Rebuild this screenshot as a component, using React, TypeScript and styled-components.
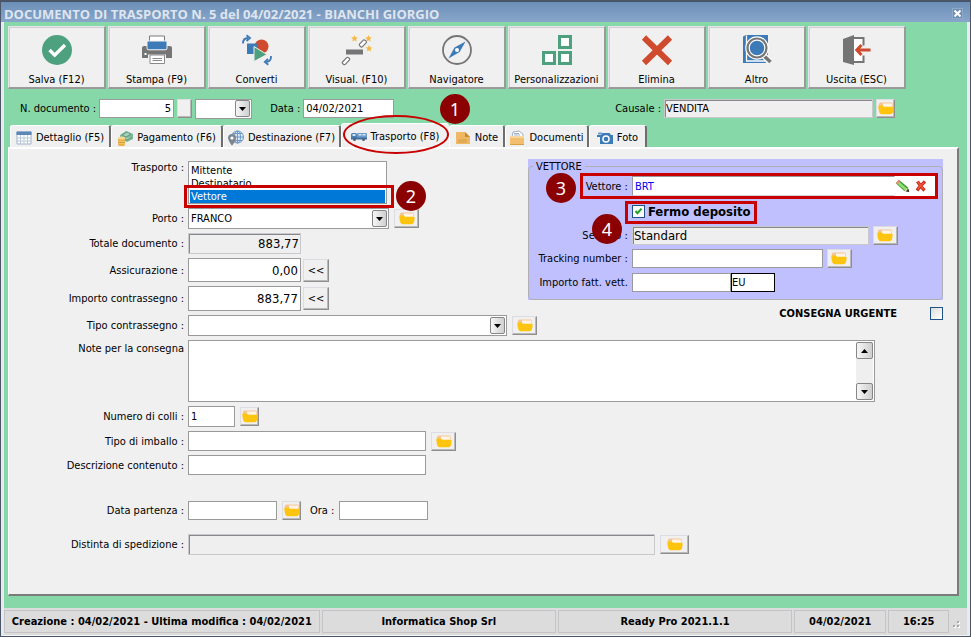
import React, { useRef } from 'react';
import styled, { createGlobalStyle, css } from 'styled-components';

const ui = '"DejaVu Sans Condensed", "DejaVu Sans", sans-serif';

const GlobalStyle = createGlobalStyle`
  * { box-sizing: border-box; }
  body { margin: 0; background: #f0f0f0; font: 11px/13px ${ui}; color: #000; }
  button, input, select, textarea { font: inherit; color: inherit; margin: 0; }
`;

/* ---------- window ---------- */

const Window = styled.div`
  display: flex;
  flex-direction: column;
  min-height: 100vh;
  border: 1px solid #4c5666;
  background: #e9e9f0;
`;

const TitleBar = styled.header`
  display: flex;
  align-items: center;
  justify-content: space-between;
  height: 21px;
  padding: 3px 7px 0 3px;
  border-top: 1px solid #46536a;
  background: linear-gradient(#6c8fb7, #88a6ca);
`;

const Title = styled.h1`
  margin: 0;
  font: bold 13px/16px "Open Sans", sans-serif;
  color: #dfe5ee;
  white-space: nowrap;
`;

const CloseButton = styled.button`
  display: flex;
  align-items: center;
  justify-content: center;
  width: 11px;
  height: 11px;
  padding: 0;
  border: 1px solid #8fa9c8;
  background: #6f8fb4;
`;

const Body = styled.main`
  flex: 1;
  display: flex;
  flex-direction: column;
  margin: 0 3px;
  padding: 4px 8px 12px 4px;
  background: #86d8a8;
`;

/* ---------- toolbar ---------- */

const Toolbar = styled.div`
  display: flex;
  gap: 2px;
`;

const ToolButton = styled.button`
  display: flex;
  flex-direction: column;
  align-items: center;
  gap: 7px;
  width: 98px;
  height: 63px;
  padding: 7px 0 0;
  border: 1px solid #e4e4ea;
  border-right: 2px solid #9a9a9a;
  border-bottom: 2px solid #9a9a9a;
  background: #f0f0f0;
  box-shadow: inset 1px 1px 0 #cfcfd4;
  white-space: nowrap;
  svg { display: block; width: 32px; height: 32px; }
`;

/* ---------- controls ---------- */

const sunken = css`
  padding: 0 1px;
  border-color: #c8c8cd;
  background: #efefef;
  box-shadow: inset 1px 1px 0 #88888c;
`;

const TextInput = styled.input<{ $w?: number; $h?: number; $right?: boolean; $big?: boolean; $sunken?: boolean }>`
  width: ${p => (p.$w ? `${p.$w}px` : 'auto')};
  flex: ${p => (p.$w ? '0 1 auto' : '1')};
  min-width: 0;
  height: ${p => p.$h ?? 19}px;
  padding: 0 2px;
  border: 1px solid #9a9a9a;
  border-radius: 0;
  background: #fff;
  outline: 0;
  font-size: ${p => (p.$big ? 13 : 11)}px;
  text-align: ${p => (p.$right ? 'right' : 'left')};
  ${p => p.$sunken && sunken}
`;

const CarrierInput = styled(TextInput)`
  border-color: #97979c #fff #d2d2d8 #97979c;
  color: #0000f0;
`;

const CurrencyInput = styled(TextInput)`
  padding: 0;
  border-color: #000;
`;

const InputPair = styled.div`
  display: flex;
`;

const PushButton = styled.button<{ $w: number; $h?: number }>`
  display: flex;
  align-items: center;
  justify-content: center;
  flex: none;
  width: ${p => p.$w}px;
  height: ${p => p.$h ?? 19}px;
  padding: 0;
  border: 1px solid #dcdce2;
  border-right-color: #8e8e8e;
  border-bottom-color: #8e8e8e;
  background: #f0f0f0;
  box-shadow: inset -1px -1px 0 #b9b9b9;
  svg { display: block; }
`;

const SelectBox = styled.div<{ $w: number; $h?: number }>`
  flex: none;
  display: grid;
  width: ${p => p.$w}px;
  height: ${p => p.$h ?? 21}px;
  border: 1px solid #9a9a9a;
  background: #fff;
  > * { grid-area: 1 / 1; }
`;

const Select = styled.select`
  appearance: none;
  width: 100%;
  padding: 0 18px 0 2px;
  border: 0;
  border-radius: 0;
  background: transparent;
  outline: 0;
`;

const Arrow = styled.span`
  display: flex;
  align-items: center;
  justify-content: center;
  justify-self: end;
  align-self: center;
  width: 15px;
  height: 17px;
  margin-right: 1px;
  border: 1px solid #85858a;
  border-radius: 2px;
  background: linear-gradient(90deg, #f6f6f6, #cfcfcf);
  pointer-events: none;
`;

const ListBox = styled.select`
  appearance: none;
  display: block;
  width: 199px;
  height: 43px;
  padding: 2px 1px;
  border: 1px solid #9a9a9a;
  border-radius: 0;
  background: #fff;
  outline: 0;
  overflow: hidden;
  option {
    min-height: 13px;
    height: 13px;
    padding: 0 1px;
    line-height: 13px;
  }
  option:checked {
    background: #0078d7 linear-gradient(#0078d7, #0078d7);
    color: #fff;
    -webkit-text-fill-color: #fff;
  }
`;

const CheckBox = styled.input`
  appearance: none;
  flex: none;
  width: 13px;
  height: 13px;
  border: 1px solid #1f5287;
  background: linear-gradient(135deg, #dcdcd7, #fff);
  &:checked {
    background: #fff
      url("data:image/svg+xml,%3Csvg xmlns='http://www.w3.org/2000/svg' viewBox='0 0 11 11'%3E%3Cpath d='M2.5 5l2 2.2 4-4.6' fill='none' stroke='%2321a121' stroke-width='2'/%3E%3C/svg%3E");
  }
`;

/* ---------- document row ---------- */

const DocRow = styled.div`
  display: flex;
  align-items: center;
  height: 19px;
  margin-top: 10px;
  padding: 0 64px 0 12px;
`;

const DocField = styled.div<{ $end?: boolean }>`
  display: flex;
  align-items: center;
  gap: 3px;
  margin-left: ${p => (p.$end ? 'auto' : '0')};
  margin-right: ${p => (p.$end ? '0' : '18px')};
`;

const DocLabel = styled.label`
  white-space: nowrap;
`;

/* ---------- tabs ---------- */

const Tabs = styled.div`
  display: flex;
  align-items: flex-end;
  height: 24px;
  margin-top: 5px;
  padding-left: 2px;
`;

const Tab = styled.button<{ $w: number; $active?: boolean }>`
  position: relative;
  display: flex;
  align-items: center;
  justify-content: center;
  gap: 4px;
  width: ${p => p.$w}px;
  height: ${p => (p.$active ? 24 : 22)}px;
  padding: 2px 0 0;
  border: 0;
  border-top: 1px solid #fff;
  border-left: 1px solid #fff;
  border-right: ${p => (p.$active ? '1px solid #f0f0f0' : '2px solid #6e6e6e')};
  border-radius: 3px 3px 0 0;
  background: #f0f0f0;
  white-space: nowrap;
  svg { flex: none; }
`;

const Panel = styled.section`
  flex: 1;
  padding: 10px 14px 37px 0;
  border: 1px solid #fff;
  border-top-width: 2px;
  border-right: 2px solid #7b7b7b;
  border-bottom: 2px solid #7b7b7b;
  background: #f0f0f0;
`;

const Columns = styled.div`
  display: grid;
  grid-template-columns: minmax(0, 5fr) minmax(0, 4fr);
  align-items: start;
`;

const Stack = styled.div<{ $top?: number }>`
  display: flex;
  flex-direction: column;
  gap: 4px;
  padding-top: ${p => p.$top ?? 4}px;
`;

const FormRow = styled.div<{ $top?: boolean; $before?: number; $gap?: number }>`
  display: flex;
  align-items: ${p => (p.$top ? 'flex-start' : 'center')};
  gap: ${p => p.$gap ?? 5}px;
  margin-top: ${p => p.$before ?? 0}px;
`;

const FormLabel = styled.label<{ $gap?: number; $top?: boolean }>`
  flex: none;
  width: 175px;
  margin-right: ${p => 4 - (p.$gap ?? 5)}px;
  padding-top: ${p => (p.$top ? 2 : 0)}px;
  text-align: right;
  white-space: nowrap;
`;

const InlineLabel = styled.label`
  margin: 0 0 0 4px;
  white-space: nowrap;
`;

const Overlaid = styled.div`
  position: relative;
`;

const NotesBox = styled.div`
  flex: 1;
  display: flex;
  height: 62px;
  margin-right: 68px;
  padding: 1px;
  border: 1px solid #9a9a9a;
  background: #fff;
`;

const Notes = styled.textarea`
  flex: 1;
  padding: 1px;
  border: 0;
  outline: 0;
  resize: none;
  background: transparent;
  scrollbar-width: none;
`;

const ScrollRail = styled.div`
  display: flex;
  flex-direction: column;
  justify-content: space-between;
  width: 17px;
  background: #efefef;
`;

const ScrollButton = styled.button`
  display: flex;
  align-items: center;
  justify-content: center;
  width: 17px;
  height: 17px;
  padding: 0;
  border: 1px solid #85858a;
  border-radius: 2px;
  background: linear-gradient(90deg, #f6f6f6, #cfcfcf);
`;

/* ---------- carrier group ---------- */

const Carrier = styled.div`
  background: #c0c0ff;
`;

const Group = styled.fieldset`
  display: block;
  min-width: 0;
  margin: 0;
  padding: 3px 7px 7px 0;
  border: 1px solid #b0b0b4;
  border-radius: 4px;
`;

const Legend = styled.legend`
  margin-left: 4px;
  padding: 1px 3px 0;
  line-height: 13px;
`;

const GroupRow = styled.div<{ $h?: number }>`
  position: relative;
  display: flex;
  align-items: center;
  gap: 4px;
  height: ${p => p.$h ?? 20}px;
`;

const GroupLabel = styled.label`
  flex: none;
  width: 99px;
  text-align: right;
  white-space: nowrap;
`;

const CarrierField = styled.div`
  flex: 1;
  display: flex;
  align-items: center;
  background: #fff;
`;

const IconButton = styled.button`
  display: flex;
  width: 20px;
  padding: 0;
  border: 0;
  background: transparent;
`;

const DepositLabel = styled.label`
  position: relative;
  display: flex;
  align-items: center;
  gap: 3px;
  height: 22px;
  margin-left: 103px;
  font-size: 13px;
  font-weight: bold;
`;

const UrgentLabel = styled.label`
  display: flex;
  align-items: center;
  justify-content: flex-end;
  gap: 33px;
  height: 14px;
  margin-top: 6px;
  font-weight: bold;
`;

/* ---------- callouts ---------- */

const Badge = styled.span<{ $x: number; $y: number }>`
  position: absolute;
  z-index: 3;
  left: ${p => p.$x}px;
  top: ${p => p.$y}px;
  display: flex;
  align-items: center;
  justify-content: center;
  width: 30px;
  height: 30px;
  border-radius: 50%;
  background: #8b0000;
  color: #fff;
  font: 18px/24px "Noto Sans", sans-serif;
`;

const Highlight = styled.span<{ $inset: string; $oval?: boolean }>`
  position: absolute;
  z-index: 2;
  inset: ${p => p.$inset};
  border: ${p => (p.$oval ? 2 : 3)}px solid #c80000;
  border-radius: ${p => (p.$oval ? '50%' : '0')};
  pointer-events: none;
`;

/* ---------- status bar ---------- */

const StatusBar = styled.footer`
  display: flex;
  gap: 2px;
  height: 28px;
  margin: 0 3px;
  padding: 2px 1px 2px 0;
  border-bottom: 1px solid #f4f4f4;
  background: #dcdcdc;
`;

const StatusCell = styled.div<{ $grow: number }>`
  flex: ${p => p.$grow} 1 0;
  display: flex;
  align-items: center;
  justify-content: center;
  border: 1px solid #c4c4c8;
  font-weight: bold;
  white-space: nowrap;
`;

const Grip = styled.div`
  display: flex;
  align-items: flex-end;
  width: 15px;
  padding: 0 0 5px 2px;
`;

/* ---------- icons ---------- */

const Folder = () => (
  <svg width="16" height="13" viewBox="0 0 16 13">
    <path d="M2 .5h12l1 1.500V7H.8V2z" fill="#f6c596" />
    <path d="M5 1.500h8.500c.6 0 .9.5.9 1.200V5H5z" fill="#fff4e6" />
    <path d="M.4 4c0-.4.3-.6.8-.6h3.400c.8 0 .8 1.300 1.800 1.300h8.400c.5 0 .8.200.8.700 0 3-.5 5-1.500 6.200-.4.500-.8.700-1.400.7H3.400c-.6 0-1-.2-1.400-.7C.9 10.300.4 7.500.4 4z" fill="#ffc40d" />
  </svg>
);

const FolderButton = ({ w, label }: { w: number; label: string }) => (
  <PushButton type="button" $w={w} aria-label={label}><Folder /></PushButton>
);

const Down = () => (
  <svg width="7" height="4" viewBox="0 0 7 4"><path d="M0 0h7L3.500 4z" /></svg>
);
const Up = () => (
  <svg width="7" height="4" viewBox="0 0 7 4"><path d="M0 4h7L3.500 0z" /></svg>
);

const SaveIcon = () => (
  <svg viewBox="0 0 32 32">
    <circle cx="16" cy="16" r="15" fill="#4da17f" />
    <path d="M8.500 16l5.200 5.200L24 11" fill="none" stroke="#fff" strokeWidth="3.400" />
  </svg>
);
const PrintIcon = () => (
  <svg viewBox="0 0 32 32">
    <path d="M8.500 2h15v9h-15z" fill="#fff" stroke="#7a7a7a" />
    <path d="M3 12h3v4h20v-4h3c1 0 2 .8 2 2v10H1V14c0-1.200 1-2 2-2z" fill="#757575" />
    <path d="M6 7h20v7c0 1-.8 1.800-1.800 1.800H7.800c-1 0-1.800-.8-1.800-1.800z" fill="#3d7ab8" stroke="#f0f0f0" />
    <path d="M8 21.500h16v8H8z" fill="#fff" stroke="#f0f0f0" strokeWidth="2" />
    <path d="M9 21h14.500v8.500H9z" fill="#fff" stroke="#8a8a8a" />
    <path d="M11.500 24.500h9.500M11.500 26.500h9.500" stroke="#8a8a8a" />
    <path d="M3.500 20h2" stroke="#fff" strokeWidth="2" />
  </svg>
);
const ConvertIcon = () => (
  <svg viewBox="0 0 32 32">
    <circle cx="20.500" cy="12.500" r="7" fill="#d04a2e" />
    <path d="M6 9.500h10.500V20H6z" fill="#3d7ab8" />
    <path d="M13 12.500L26 20.500 13 27.500z" fill="#4da17f" stroke="#f0f0f0" />
    <path d="M2 9.500C2 6 3.500 4 7 4M5.500 1.200L9 4 5.500 7M30 22c.2 3-1 5.500-4.500 5.800M27 24.800l-3.200 3.100 3.500 2.800" fill="none" stroke="#3d7ab8" strokeWidth="1.800" />
  </svg>
);
const star = 'l1 2.200 2.400.3-1.800 1.600.5 2.400-2.100-1.200-2.100 1.200.5-2.400-1.800-1.600 2.400-.3z';
const VisualIcon = () => (
  <svg viewBox="0 0 32 32">
    <path d="M5 15.500h17v5H5z" fill="#757575" />
    <path d={`M13.500 1${star}M27.500 1${star}M28 11${star}`} fill="#f5b942" />
    <path d="M18.500 10.200l3.800-4c1-1 4 1.300 3 2.400l-4 4.200c-1 1-3.800-1.500-2.800-2.600zM1.500 28l4.200-4.300c1-1 3.800 1 2.800 2.200L4.300 30.400c-1 1-3.800-1.300-2.800-2.400z" fill="#fff" stroke="#757575" strokeWidth="1.200" />
  </svg>
);
const CompassIcon = () => (
  <svg viewBox="0 0 32 32">
    <circle cx="16" cy="16" r="14" fill="none" stroke="#757575" strokeWidth="1.800" />
    <path d="M24.500 7.500L18.600 18 7.500 24.500l6-11z" fill="#3d7ab8" />
    <circle cx="16" cy="16" r="2" fill="#fff" />
  </svg>
);
const BlocksIcon = () => (
  <svg viewBox="0 0 32 32">
    <path d="M18.500 2.500h11v11h-11zM2.500 18.500h11v11h-11zM18.500 18.500h11v11h-11z" fill="#fff" stroke="#4da17f" strokeWidth="3" />
  </svg>
);
const DeleteIcon = () => (
  <svg viewBox="0 0 32 32">
    <path d="M3 3.500l26 25.500M29 3.500L3 29" stroke="#d04a2e" strokeWidth="6" />
  </svg>
);
const SearchBookIcon = () => (
  <svg viewBox="0 0 32 32">
    <path d="M2 2.500L5 1h22v26.500l-3 1.500H2z" fill="#3d7ab8" />
    <path d="M5.500 1.500V27H26" fill="none" stroke="#fff" strokeWidth="1.300" />
    <path d="M21.500 20.500l7.500 7" stroke="#fff" strokeWidth="6" />
    <path d="M21 20l8.500 8" stroke="#757575" strokeWidth="3.600" />
    <circle cx="16" cy="14" r="9.500" fill="#3d7ab8" stroke="#fff" strokeWidth="4.500" />
    <circle cx="16" cy="14" r="9.500" fill="none" stroke="#757575" strokeWidth="2.200" />
  </svg>
);
const ExitIcon = () => (
  <svg viewBox="0 0 32 32">
    <path d="M13 4h9.500v24H13" fill="#fff" stroke="#757575" strokeWidth="2" />
    <path d="M2 5l11-4v30L2 28z" fill="#757575" />
    <path d="M21 11.500h4v10h-4z" fill="#f0f0f0" />
    <path d="M16 16h13.500M20.500 11L15.800 16l4.700 5" fill="none" stroke="#d04a2e" strokeWidth="3" />
  </svg>
);

const GridIcon = () => (
  <svg width="16" height="16" viewBox="0 0 16 16">
    <path d="M1 2h14v12H1z" fill="#fff" stroke="#9eb4cc" />
    <path d="M.5 1.500h15V5H.5z" fill="#5b86b8" />
    <path d="M4.500 5v9M8 5v9M11.500 5v9M1 8h14M1 11h14" stroke="#b9c9da" />
  </svg>
);
const MoneyIcon = () => (
  <svg width="16" height="16" viewBox="0 0 16 16">
    <path d="M3 5l6-4 7 3v5l-6 3-7-3z" fill="#7fb79c" />
    <path d="M5 5l5-3 4 2-5 3zM6 8l4 2 5-2.500" fill="#a9d0bc" stroke="#5d9c7e" />
    <path d="M1 8h7v7H1z" fill="#f3c46a" />
    <path d="M1 10h7M1 12.500h7" stroke="#d99b35" />
    <ellipse cx="4.500" cy="8" rx="3.500" ry="1.500" fill="#f9d992" />
    <ellipse cx="4.500" cy="15" rx="3.500" ry="1" fill="#e8b04c" />
  </svg>
);
const GlobeIcon = () => (
  <svg width="16" height="16" viewBox="0 0 16 16">
    <circle cx="9.500" cy="7" r="6" fill="#dfeaf6" stroke="#6b98c9" />
    <path d="M9.500 1v12M3.500 7h12M5 3.500h9M5 10.500h9" stroke="#6b98c9" />
    <ellipse cx="9.500" cy="7" rx="3" ry="6" fill="none" stroke="#6b98c9" />
    <path d="M4 4c2.400 0 4 1.700 4 3.800C8 10.500 4.500 15.500 4 15.500S0 10.500 0 7.800C0 5.700 1.600 4 4 4z" fill="#7d8690" />
    <circle cx="4" cy="8" r="1.600" fill="#fff" />
  </svg>
);
const TruckIcon = () => (
  <svg width="16" height="14" viewBox="0 0 16 14">
    <rect x="0" y="3" width="6" height="6" rx="1.500" fill="#4d7fb5" />
    <rect x="6" y="3" width="10" height="6" rx="1" fill="#6d9bcb" />
    <path d="M1.500 4h3v2h-3zM7.500 4h3v1.500h-3zM11.500 4h3v1.500h-3z" fill="#d8e6f4" />
    <path d="M0 7.500h16v2H0z" fill="#3f6fa5" />
    <circle cx="3.500" cy="9.500" r="1.500" fill="#566270" />
    <circle cx="12.500" cy="9.500" r="1.500" fill="#566270" />
  </svg>
);
const NoteIcon = () => (
  <svg width="16" height="16" viewBox="0 0 16 16">
    <path d="M1 2h9l5 5v7H1z" fill="#eeb864" />
    <path d="M10 2v5h5z" fill="#c98a32" />
    <path d="M3 10h9M3 12h9" stroke="#d79c48" />
  </svg>
);
const DocsIcon = () => (
  <svg width="16" height="16" viewBox="0 0 16 16">
    <path d="M3 7l1-5 6-1 4 3v3z" fill="#fff" stroke="#9fb0c4" />
    <path d="M5 3.500h5M5 5h6" stroke="#9fb0c4" />
    <path d="M1 6h14v9H1z" fill="#f2bf6e" />
    <path d="M1 6h14v2H1z" fill="#f8d79f" />
    <path d="M1 14h14v1H1z" fill="#d99f45" />
  </svg>
);
const CameraIcon = () => (
  <svg width="16" height="16" viewBox="0 0 16 16">
    <path d="M0 5h4l1.500-2h7L14 5h2v9H3V7H0z" fill="#3d7ab8" />
    <path d="M1 2.500h4v2H1z" fill="#6d9bcb" />
    <circle cx="9" cy="9" r="3.800" fill="#fff" />
    <circle cx="9" cy="9" r="2.300" fill="#3d7ab8" />
  </svg>
);
const PencilIcon = () => (
  <svg width="15" height="14" viewBox="0 0 15 14">
    <path d="M.8 4.200L3.800.8l9 7.400 1.400 4.800-4.900-1z" fill="#3f9a35" />
    <path d="M2.800 3.200L11 10.500" stroke="#8ee070" strokeWidth="2.600" />
    <path d="M.8 4.200L3.800.8l1.500 1.300-2.800 3.400z" fill="#e98a7a" />
    <path d="M12.800 8.200l-3.500 3.800 2.500.5z" fill="#ecd1a2" />
    <path d="M14.200 13l-3.400-.7 2.700-2.400z" fill="#333" />
  </svg>
);
const RedXIcon = () => (
  <svg width="12" height="12" viewBox="0 0 12 12">
    <path d="M2.500 1.500C4 4 7 8 9.500 10.500M10 1.500C7 4 4 7.500 2 10.500" stroke="#c9301c" strokeWidth="3.400" fill="none" />
    <path d="M3 2c1.500 2.500 4 5.500 6 7.500M9 2.500C7 4 4 7 2.800 9.500" stroke="#f0593f" strokeWidth="1.400" fill="none" />
  </svg>
);

const tools: [string, React.ReactNode][] = [
  ['Salva (F12)', <SaveIcon />],
  ['Stampa (F9)', <PrintIcon />],
  ['Converti', <ConvertIcon />],
  ['Visual. (F10)', <VisualIcon />],
  ['Navigatore', <CompassIcon />],
  ['Personalizzazioni', <BlocksIcon />],
  ['Elimina', <DeleteIcon />],
  ['Altro', <SearchBookIcon />],
  ['Uscita (ESC)', <ExitIcon />],
];

const tabs: [string, number, React.ReactNode][] = [
  ['Dettaglio (F5)', 101, <GridIcon />],
  ['Pagamento (F6)', 112, <MoneyIcon />],
  ['Destinazione (F7)', 118, <GlobeIcon />],
  ['Trasporto (F8)', 108, <TruckIcon />],
  ['Note', 56, <NoteIcon />],
  ['Documenti', 84, <DocsIcon />],
  ['Foto', 58, <CameraIcon />],
];

export default function App() {
  const notes = useRef<HTMLTextAreaElement>(null);
  const scroll = (dy: number) => notes.current?.scrollBy({ top: dy });

  return (
    <Window>
      <GlobalStyle />
      <TitleBar>
        <Title>DOCUMENTO DI TRASPORTO N. 5 del 04/02/2021 - BIANCHI GIORGIO</Title>
        <CloseButton type="button" aria-label="Chiudi">
          <svg width="7" height="7" viewBox="0 0 7 7"><path d="M.5.500l6 6M6.500.500l-6 6" stroke="#fff" strokeWidth="2" /></svg>
        </CloseButton>
      </TitleBar>

      <Body>
        <Toolbar>
          {tools.map(([name, icon]) => (
            <ToolButton type="button" key={name}>{icon}{name}</ToolButton>
          ))}
        </Toolbar>

        <DocRow>
          <DocField>
            <DocLabel htmlFor="num">N. documento :</DocLabel>
            <TextInput id="num" $w={75} $right defaultValue="5" />
            <PushButton type="button" $w={15} aria-label="Numerazione" />
            <SelectBox $w={57} $h={20}>
              <Select aria-label="Serie"><option /></Select>
              <Arrow><Down /></Arrow>
            </SelectBox>
          </DocField>
          <DocField>
            <DocLabel htmlFor="date">Data :</DocLabel>
            <TextInput id="date" $w={91} defaultValue="04/02/2021" />
          </DocField>
          <DocField $end>
            <DocLabel htmlFor="reason">Causale :</DocLabel>
            <TextInput id="reason" $w={209} $sunken readOnly value="VENDITA" />
            <FolderButton w={19} label="Scegli causale" />
          </DocField>
        </DocRow>

        <Tabs role="tablist">
          {tabs.map(([name, w, icon]) => {
            const active = name === 'Trasporto (F8)';
            return (
              <Tab type="button" role="tab" key={name} $w={w} $active={active} aria-selected={active}>
                {icon}{name}
                {active && <Highlight $oval $inset="-9px -1px -7px 1px" />}
                {active && <Badge $x={98} $y={-30}>1</Badge>}
              </Tab>
            );
          })}
        </Tabs>

        <Panel>
          <Columns>
            <Stack $top={2}>
              <FormRow $top>
                <FormLabel htmlFor="transport">Trasporto :</FormLabel>
                <Overlaid>
                  <ListBox id="transport" size={3} defaultValue="Vettore">
                    <option>Mittente</option>
                    <option>Destinatario</option>
                    <option>Vettore</option>
                  </ListBox>
                  <Highlight $inset="24px -7px -4px -4px" />
                  <Badge $x={208} $y={20}>2</Badge>
                </Overlaid>
              </FormRow>
              <FormRow>
                <FormLabel htmlFor="port">Porto :</FormLabel>
                <SelectBox $w={201}>
                  <Select id="port"><option>FRANCO</option></Select>
                  <Arrow><Down /></Arrow>
                </SelectBox>
                <FolderButton w={25} label="Scegli porto" />
              </FormRow>
              <FormRow>
                <FormLabel htmlFor="total">Totale documento :</FormLabel>
                <TextInput id="total" $w={113} $h={21} $right $big $sunken readOnly value="883,77" />
              </FormRow>
              <FormRow $gap={2}>
                <FormLabel $gap={2} htmlFor="insurance">Assicurazione :</FormLabel>
                <TextInput id="insurance" $w={113} $h={24} $right $big defaultValue="0,00" />
                <PushButton type="button" $w={26} $h={23}>&lt;&lt;</PushButton>
              </FormRow>
              <FormRow $gap={2}>
                <FormLabel $gap={2} htmlFor="cod">Importo contrassegno :</FormLabel>
                <TextInput id="cod" $w={113} $h={25} $right $big defaultValue="883,77" />
                <PushButton type="button" $w={26} $h={23}>&lt;&lt;</PushButton>
              </FormRow>
              <FormRow>
                <FormLabel htmlFor="codType">Tipo contrassegno :</FormLabel>
                <SelectBox $w={319}>
                  <Select id="codType"><option /></Select>
                  <Arrow><Down /></Arrow>
                </SelectBox>
                <FolderButton w={25} label="Scegli tipo contrassegno" />
              </FormRow>
            </Stack>

            <div>
              <Carrier>
                <Group>
                  <Legend>VETTORE</Legend>
                  <Stack $top={0}>
                    <GroupRow>
                      <GroupLabel htmlFor="carrier">Vettore :</GroupLabel>
                      <CarrierField>
                        <CarrierInput id="carrier" $h={20} defaultValue="BRT" />
                        <IconButton type="button" aria-label="Modifica vettore"><PencilIcon /></IconButton>
                        <IconButton type="button" aria-label="Rimuovi vettore"><RedXIcon /></IconButton>
                      </CarrierField>
                      <Highlight $inset="-3px -3px -3px 51px" />
                      <Badge $x={17} $y={-3}>3</Badge>
                    </GroupRow>
                    <GroupRow $h={22}>
                      <DepositLabel>
                        <CheckBox type="checkbox" defaultChecked />
                        Fermo deposito
                        <Highlight $inset="1px -6px -2px -7px" />
                      </DepositLabel>
                    </GroupRow>
                    <GroupRow $h={18}>
                      <GroupLabel htmlFor="service">Servizio :</GroupLabel>
                      <TextInput id="service" $w={237} $big $sunken readOnly value="Standard" />
                      <FolderButton w={25} label="Scegli servizio" />
                      <Badge $x={63} $y={-12}>4</Badge>
                    </GroupRow>
                    <GroupRow>
                      <GroupLabel htmlFor="tracking">Tracking number :</GroupLabel>
                      <TextInput id="tracking" $w={191} />
                      <FolderButton w={25} label="Apri tracking" />
                    </GroupRow>
                    <GroupRow>
                      <GroupLabel htmlFor="invoice">Importo fatt. vett.</GroupLabel>
                      <InputPair>
                        <TextInput id="invoice" $w={99} />
                        <CurrencyInput aria-label="Valuta" $w={44} defaultValue="EU" />
                      </InputPair>
                    </GroupRow>
                  </Stack>
                </Group>
              </Carrier>
              <UrgentLabel>CONSEGNA URGENTE<CheckBox type="checkbox" /></UrgentLabel>
            </div>
          </Columns>

          <Stack>
            <FormRow $top>
              <FormLabel $top htmlFor="notes">Note per la consegna</FormLabel>
              <NotesBox>
                <Notes id="notes" ref={notes} />
                <ScrollRail>
                  <ScrollButton type="button" aria-label="Su" onClick={() => scroll(-13)}><Up /></ScrollButton>
                  <ScrollButton type="button" aria-label="Giù" onClick={() => scroll(13)}><Down /></ScrollButton>
                </ScrollRail>
              </NotesBox>
            </FormRow>
            <FormRow>
              <FormLabel htmlFor="parcels">Numero di colli :</FormLabel>
              <TextInput id="parcels" $w={47} $h={21} defaultValue="1" />
              <FolderButton w={19} label="Apri colli" />
            </FormRow>
            <FormRow>
              <FormLabel htmlFor="packing">Tipo di imballo :</FormLabel>
              <TextInput id="packing" $w={238} $h={20} />
              <FolderButton w={25} label="Scegli imballo" />
            </FormRow>
            <FormRow>
              <FormLabel htmlFor="content">Descrizione contenuto :</FormLabel>
              <TextInput id="content" $w={238} $h={20} />
            </FormRow>
            <FormRow $before={22}>
              <FormLabel htmlFor="departure">Data partenza :</FormLabel>
              <TextInput id="departure" $w={89} />
              <FolderButton w={19} label="Apri calendario" />
              <InlineLabel htmlFor="hour">Ora :</InlineLabel>
              <TextInput id="hour" $w={89} />
            </FormRow>
            <FormRow $before={10}>
              <FormLabel htmlFor="manifest">Distinta di spedizione :</FormLabel>
              <TextInput id="manifest" $w={467} $h={21} $sunken readOnly value="" />
              <FolderButton w={29} label="Apri distinta" />
            </FormRow>
          </Stack>
        </Panel>
      </Body>

      <StatusBar>
        <StatusCell $grow={316}>Creazione : 04/02/2021 - Ultima modifica : 04/02/2021</StatusCell>
        <StatusCell $grow={234}>Informatica Shop Srl</StatusCell>
        <StatusCell $grow={234}>Ready Pro 2021.1.1</StatusCell>
        <StatusCell $grow={91}>04/02/2021</StatusCell>
        <StatusCell $grow={59}>16:25</StatusCell>
        <Grip>
          <svg width="9" height="9" viewBox="0 0 9 9">
            <path d="M1 7h2v2H1zM5 7h2v2H5zM5 3h2v2H5z" fill="#fff" />
            <path d="M0 6h2v2H0zM4 6h2v2H4zM4 2h2v2H4z" fill="#a8a8a8" />
          </svg>
        </Grip>
      </StatusBar>
    </Window>
  );
}
